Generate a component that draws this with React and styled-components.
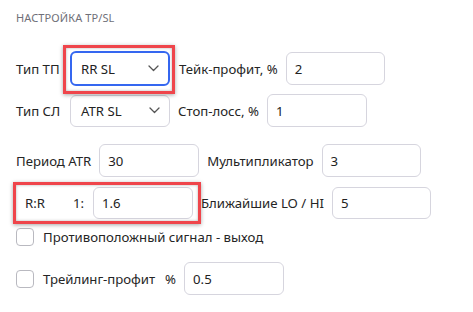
import React from "react";
import styled, { createGlobalStyle } from "styled-components";

const Global = createGlobalStyle`
  html, body { margin: 0; padding: 0; background: #fff; }
  body { font-family: "Noto Sans", "Open Sans", sans-serif; color: #252525; }
`;

const Panel = styled.div`
  width: 473px;
  height: 312px;
  box-sizing: border-box;
  padding: 10px 16px 0 16px;
  display: flex;
  flex-direction: column;
  overflow: hidden;
`;

const Heading = styled.div`
  font-size: 11px;
  letter-spacing: 0.1px;
  color: #6f6f78;
  text-transform: uppercase;
  height: 15px;
  line-height: 15px;
  margin-bottom: 26px;
`;

const Row = styled.div`
  display: flex;
  align-items: center;
  gap: 8px;
  height: ${(p) => p.$h || 33}px;
  margin-top: ${(p) => p.$mt || 0}px;
  font-size: 13.2px;
`;

const Label = styled.span`
  white-space: nowrap;
  margin-left: ${(p) => p.$ml || 0}px;
`;

const Input = styled.div`
  box-sizing: border-box;
  width: ${(p) => p.$w || 100}px;
  height: ${(p) => p.$h || 33}px;
  border: 1px solid #d6d5de;
  border-radius: 6px;
  padding-left: 8px;
  display: flex;
  align-items: center;
  font-size: 13.2px;
  color: #222;
  background: #fff;
  flex: none;
`;

const Select = styled.div`
  box-sizing: border-box;
  width: 100px;
  height: ${(p) => (p.$focused ? 35 : 32)}px;
  border: ${(p) => (p.$focused ? "2px solid #3567f0" : "1px solid #d6d5de")};
  border-radius: 6px;
  padding: 0 9px 0 ${(p) => (p.$focused ? 9 : 10)}px;
  display: flex;
  align-items: center;
  justify-content: space-between;
  font-size: 13.2px;
  color: #222;
  background: #fff;
  flex: none;
`;

const Highlight = styled.span`
  position: relative;
  display: inline-flex;
  align-items: center;
  gap: ${(p) => p.$gap || 0}px;
  flex: none;
  &::after {
    content: "";
    position: absolute;
    left: ${(p) => p.$l}px;
    right: ${(p) => p.$r}px;
    top: ${(p) => p.$t}px;
    bottom: ${(p) => p.$b}px;
    border: 3px solid #ef454b;
    box-shadow: 0 1px 4px rgba(0, 0, 0, 0.35), inset 0 0 3px rgba(0, 0, 0, 0.3);
    pointer-events: none;
  }
`;

const Check = styled.span`
  box-sizing: border-box;
  width: 18px;
  height: 18px;
  border: 1px solid #b9b9c0;
  border-radius: 4px;
  background: #fff;
  flex: none;
  margin-right: 1px;
`;

const Chevron = () => (
  <svg width="11" height="7" viewBox="0 0 11 7" fill="none">
    <path d="M1 1l4.5 4.5L10 1" stroke="#555" strokeWidth="1.3" strokeLinecap="round" strokeLinejoin="round" />
  </svg>
);

export default function App() {
  return (
    <>
      <Global />
      <Panel>
        <Heading>Настройка TP/SL</Heading>
        <Row $mt={0} style={{ height: 35 }}>
          <Label style={{ width: 46 }}>Тип ТП</Label>
          <Highlight $l={-7} $r={-5} $t={-6} $b={-8}>
            <Select $focused>
              RR SL
              <Chevron />
            </Select>
          </Highlight>
          <Label $ml={1}>Тейк-профит, %</Label>
          <Input $w={99}>2</Input>
        </Row>
        <Row $mt={8}>
          <Label style={{ width: 46 }}>Тип СЛ</Label>
          <Select>
            ATR SL
            <Chevron />
          </Select>
          <Label>Стоп-лосс, %</Label>
          <Input>1</Input>
        </Row>
        <Row $mt={17}>
          <Label>Период ATR</Label>
          <Input>30</Input>
          <Label>Мультипликатор</Label>
          <Input $w={99}>3</Input>
        </Row>
        <Row $mt={10} $h={32}>
          <Highlight $l={-3} $r={-8} $t={-5} $b={-5}>
            <Label $ml={9} style={{ width: 48 }}>R:R</Label>
            <Label style={{ width: 20 }}>1:</Label>
            <Input $h={32}>1.6</Input>
          </Highlight>
          <Label>Ближайшие LO / HI</Label>
          <Input $w={99} $h={32}>5</Input>
        </Row>
        <Row $mt={1} $h={33}>
          <Check />
          <Label>Противоположный сигнал - выход</Label>
        </Row>
        <Row $mt={9} $h={33}>
          <Check />
          <Label>Трейлинг-профит</Label>
          <Label $ml={2}>%</Label>
          <Input>0.5</Input>
        </Row>
      </Panel>
    </>
  );
}
